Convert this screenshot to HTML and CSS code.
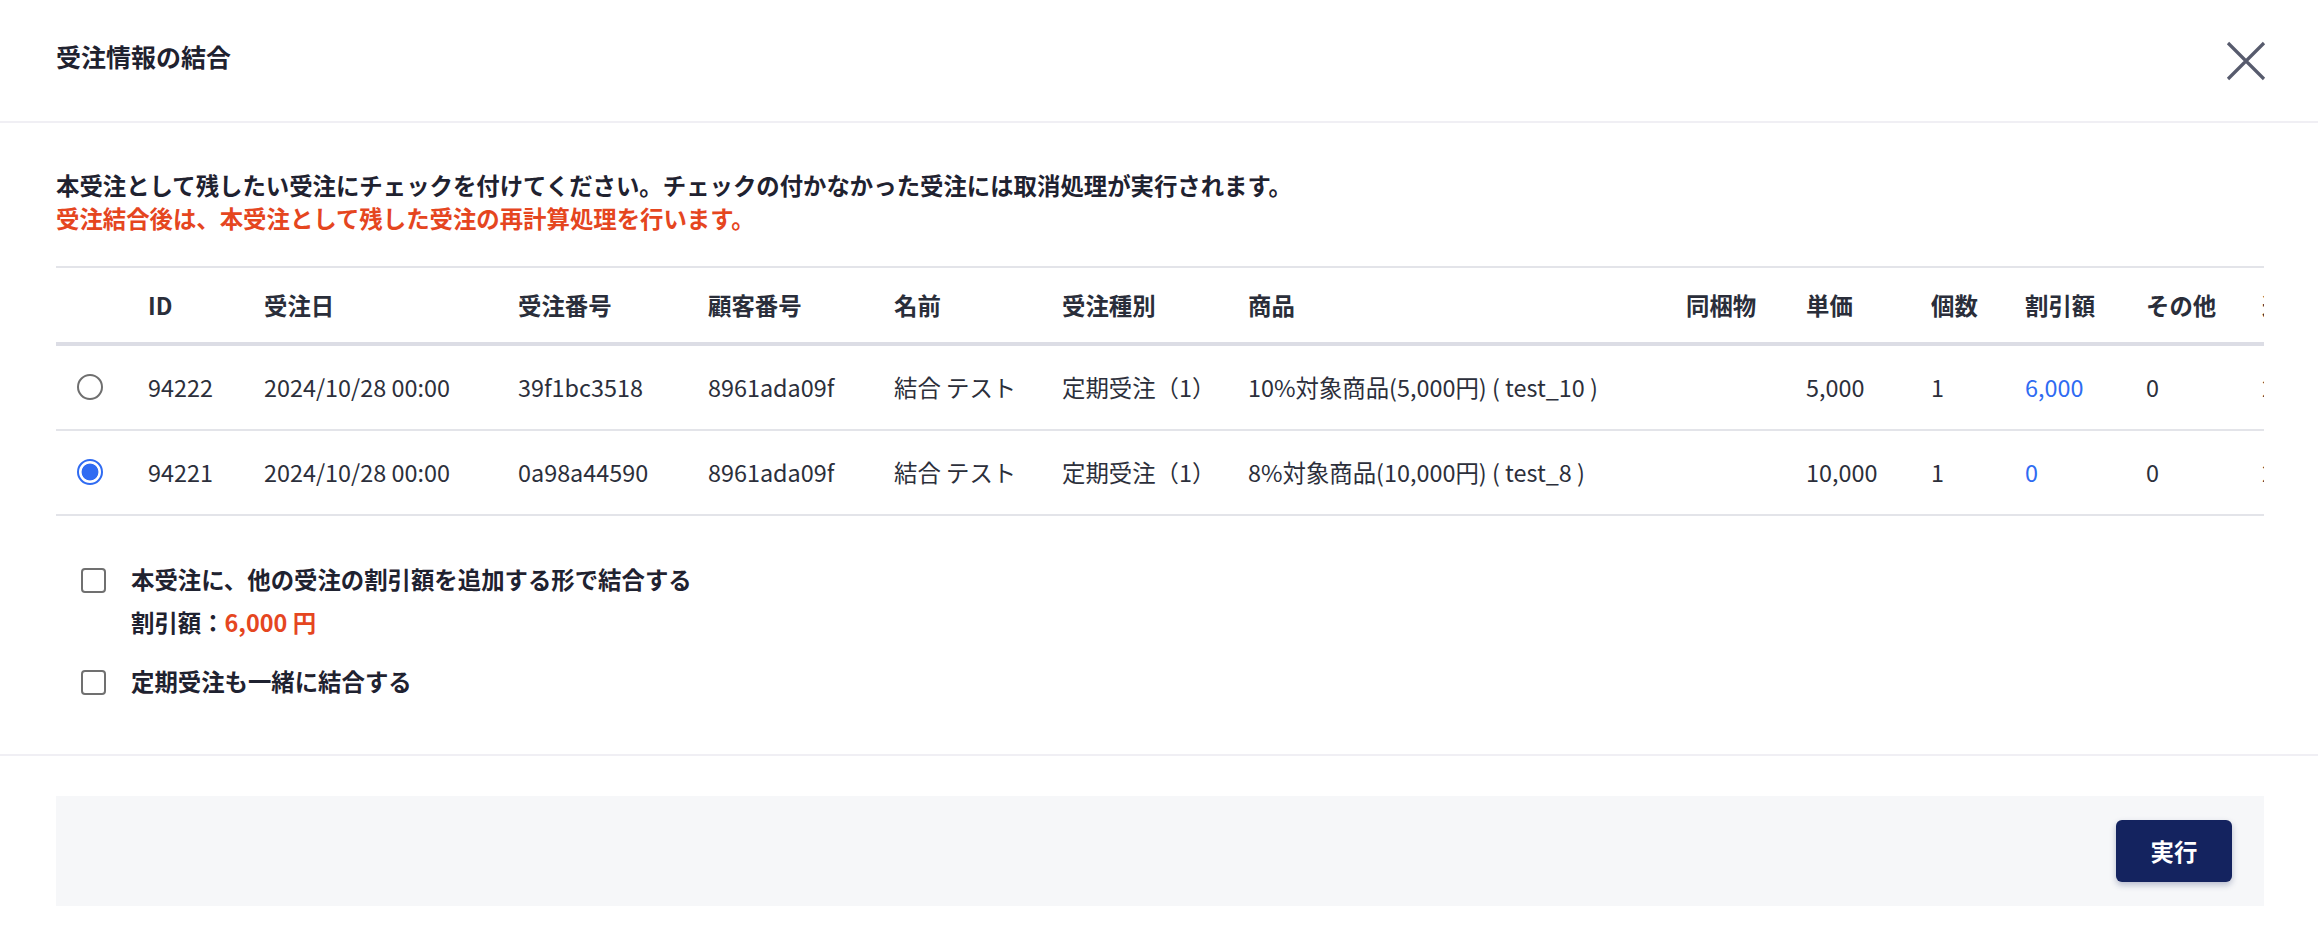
FILE: index.html
```html
<!DOCTYPE html>
<html lang="ja">
<head>
<meta charset="utf-8">
<title>受注情報の結合</title>
<link rel="stylesheet" href="styles.css">
</head>
<body>
<div class="modal">
  <header class="modal-header">
    <h1 class="title">受注情報の結合</h1>
    <button class="close" aria-label="閉じる">
      <svg viewBox="0 0 40 40" width="40" height="40"><path d="M2 2 L38 38 M38 2 L2 38" stroke="#575b6d" stroke-width="3.2" fill="none"/></svg>
    </button>
  </header>

  <main class="modal-body">
    <div class="notice">
      <p>本受注として残したい受注にチェックを付けてください。チェックの付かなかった受注には取消処理が実行されます。</p>
      <p class="warn">受注結合後は、本受注として残した受注の再計算処理を行います。</p>
    </div>

    <div class="table-wrap">
      <table class="orders">
        <colgroup>
          <col class="c-sel"><col class="c-id"><col class="c-date"><col class="c-no"><col class="c-cust"><col class="c-name"><col class="c-type"><col class="c-item"><col class="c-bundle"><col class="c-price"><col class="c-qty"><col class="c-disc"><col class="c-other"><col class="c-ship"><col class="c-total">
        </colgroup>
        <thead>
          <tr>
            <th></th><th>ID</th><th>受注日</th><th>受注番号</th><th>顧客番号</th><th>名前</th><th>受注種別</th><th>商品</th><th>同梱物</th><th>単価</th><th>個数</th><th>割引額</th><th>その他</th><th>送料</th><th>合計</th>
          </tr>
        </thead>
        <tbody>
          <tr>
            <td><input class="radio" type="radio" name="main"></td>
            <td>94222</td><td>2024/10/28 00:00</td><td>39f1bc3518</td><td>8961ada09f</td><td>結合 テスト</td><td>定期受注（1）</td><td>10%対象商品(5,000円) ( test_10 )</td><td></td><td>5,000</td><td>1</td><td class="link">6,000</td><td>0</td><td>2</td><td>0</td>
          </tr>
          <tr>
            <td><input class="radio" type="radio" name="main" checked></td>
            <td>94221</td><td>2024/10/28 00:00</td><td>0a98a44590</td><td>8961ada09f</td><td>結合 テスト</td><td>定期受注（1）</td><td>8%対象商品(10,000円) ( test_8 )</td><td></td><td>10,000</td><td>1</td><td class="link">0</td><td>0</td><td>2</td><td>0</td>
          </tr>
        </tbody>
      </table>
    </div>

    <div class="options">
      <label class="option">
        <input class="check" type="checkbox">
        <span class="option-text">
          <span class="line">本受注に、他の受注の割引額を追加する形で結合する</span>
          <span class="line sub">割引額：<em class="amount">6,000 円</em></span>
        </span>
      </label>
      <label class="option">
        <input class="check" type="checkbox">
        <span class="option-text">
          <span class="line">定期受注も一緒に結合する</span>
        </span>
      </label>
    </div>
  </main>

  <footer class="modal-footer">
    <div class="actions">
      <button class="run">実行</button>
    </div>
  </footer>
</div>
</body>
</html>
```
FILE: styles.css
```css
html, body {
  margin: 0;
  padding: 0;
  background: #ffffff;
}
body {
  font-family: "Noto Sans CJK JP", "Noto Sans", sans-serif;
  font-size: 23.4px;
  color: #1f2230;
}

.modal-header {
  display: flex;
  justify-content: space-between;
  align-items: flex-start;
  box-sizing: border-box;
  height: 123px;
  padding: 38px 52px 0 56px;
  border-bottom: 2px solid #f0eff4;
}
.title {
  margin: 0;
  font-size: 25px;
  line-height: 36px;
  font-weight: 700;
  color: #1f2230;
}
.close {
  width: 40px;
  height: 40px;
  margin-top: 3px;
  padding: 0;
  border: none;
  background: transparent;
  display: block;
}
.close svg { display: block; }

.modal-body {
  padding: 45.5px 54px 55px 56px;
}
.notice p {
  margin: 0;
  line-height: 33px;
  font-weight: 700;
  color: #1f2230;
}
.notice .warn { color: #e5461f; }

.table-wrap {
  margin-top: 31.5px;
  overflow: hidden;
}
.orders {
  border-collapse: separate;
  border-spacing: 0;
  table-layout: fixed;
  width: 2456px;
}
.c-sel { width: 92px; }
.c-id { width: 116px; }
.c-date { width: 254px; }
.c-no { width: 190px; }
.c-cust { width: 186px; }
.c-name { width: 168px; }
.c-type { width: 186px; }
.c-item { width: 438px; }
.c-bundle { width: 120px; }
.c-price { width: 125px; }
.c-qty { width: 94px; }
.c-disc { width: 121px; }
.c-other { width: 116px; }
.c-ship { width: 120px; }
.c-total { width: 130px; }

.orders th {
  text-align: left;
  font-weight: 700;
  padding: 20px 0;
  line-height: 34px;
  color: #2a2e3a;
  border-top: 2px solid #e3e4e9;
  border-bottom: 4px solid #dcdde5;
  white-space: nowrap;
  overflow: hidden;
}
.orders td {
  padding: 24px 0 25px;
  line-height: 34px;
  color: #2c2f3b;
  border-bottom: 2px solid #e3e4e9;
  white-space: nowrap;
  overflow: hidden;
}
.orders td.link { color: #2f6bf2; }

.radio {
  -webkit-appearance: none;
  appearance: none;
  display: block;
  box-sizing: border-box;
  width: 26px;
  height: 26px;
  margin: 4px 0 4px 21px;
  border: 2px solid #6f6f6f;
  border-radius: 50%;
  background: #fff;
}
.radio:checked {
  border: 2.5px solid #2f6bf2;
  background: radial-gradient(circle, #2f6bf2 0 8px, #ffffff 8.8px);
}

.options {
  margin-top: 45px;
  padding-left: 25px;
}
.option {
  display: flex;
  align-items: flex-start;
  gap: 25px;
}
.option + .option { margin-top: 23px; }
.check {
  -webkit-appearance: none;
  appearance: none;
  flex: none;
  box-sizing: border-box;
  width: 25px;
  height: 25px;
  margin: 6.5px 0 0 0;
  border: 2px solid #707070;
  border-radius: 4px;
  background: #fff;
}
.option-text {
  display: flex;
  flex-direction: column;
}
.option-text .line {
  line-height: 36px;
  font-weight: 700;
  color: #1f2230;
}
.option-text .sub { margin-top: 7px; }
.amount {
  font-style: normal;
  color: #e5461f;
}

.modal-footer {
  border-top: 2px solid #f0eff4;
  padding: 40px 54px 32px 56px;
}
.actions {
  display: flex;
  justify-content: flex-end;
  padding: 24px 32px;
  background: #f6f7f9;
}
.run {
  width: 116px;
  height: 62px;
  padding: 0;
  border: none;
  border-radius: 6px;
  background: #14235f;
  color: #ffffff;
  font-family: "Noto Sans CJK JP", "Noto Sans", sans-serif;
  font-size: 23.4px;
  font-weight: 700;
  box-shadow: 0 3px 6px rgba(20, 35, 95, 0.28);
}
```
